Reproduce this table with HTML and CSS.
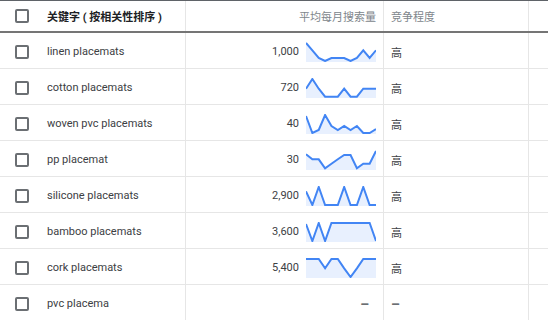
FILE: index.html
```html
<!DOCTYPE html>
<html lang="zh">
<head>
<meta charset="utf-8">
<title>关键字</title>
<link rel="stylesheet" href="styles.css">
</head>
<body>
<div class="table">
  <div class="row head">
    <div class="cell kw"><span class="cb"></span><span class="kw-title">关键字 ( 按相关性排序 )</span></div>
    <div class="cell vol"><span class="h-text">平均每月搜索量</span></div>
    <div class="cell comp"><span class="h-text">竞争程度</span></div>
    <div class="cell last"></div>
  </div>

  <div class="row">
    <div class="cell kw"><span class="cb"></span><span class="kw-text">linen placemats</span></div>
    <div class="cell vol"><span class="num">1,000</span>
      <svg class="spark" viewBox="0 0 70 20" width="70" height="20"><polygon class="area" points="0,1 6.36,8.3 12.73,16 19.09,19 25.45,16 31.82,16 38.18,16 44.55,19 50.91,16 57.27,8.3 63.64,16 70,8.3 70,20 0,20"/><polyline class="line" points="0,1 6.36,8.3 12.73,16 19.09,19 25.45,16 31.82,16 38.18,16 44.55,19 50.91,16 57.27,8.3 63.64,16 70,8.3"/></svg>
    </div>
    <div class="cell comp"><span class="comp-text">高</span></div>
    <div class="cell last"></div>
  </div>

  <div class="row">
    <div class="cell kw"><span class="cb"></span><span class="kw-text">cotton placemats</span></div>
    <div class="cell vol"><span class="num">720</span>
      <svg class="spark" viewBox="0 0 70 20" width="70" height="20"><polygon class="area" points="0,10.7 6.36,1 12.73,10.7 19.09,18.7 25.45,18.7 31.82,18.7 38.18,10.7 44.55,18.7 50.91,18.7 57.27,10.7 63.64,10.7 70,10.7 70,20 0,20"/><polyline class="line" points="0,10.7 6.36,1 12.73,10.7 19.09,18.7 25.45,18.7 31.82,18.7 38.18,10.7 44.55,18.7 50.91,18.7 57.27,10.7 63.64,10.7 70,10.7"/></svg>
    </div>
    <div class="cell comp"><span class="comp-text">高</span></div>
    <div class="cell last"></div>
  </div>

  <div class="row">
    <div class="cell kw"><span class="cb"></span><span class="kw-text">woven pvc placemats</span></div>
    <div class="cell vol"><span class="num">40</span>
      <svg class="spark" viewBox="0 0 70 20" width="70" height="20"><polygon class="area" points="0,2 6.36,19 12.73,16 19.09,1 25.45,12 31.82,16 38.18,12 44.55,16 50.91,12 57.27,19 63.64,19 70,15 70,20 0,20"/><polyline class="line" points="0,2 6.36,19 12.73,16 19.09,1 25.45,12 31.82,16 38.18,12 44.55,16 50.91,12 57.27,19 63.64,19 70,15"/></svg>
    </div>
    <div class="cell comp"><span class="comp-text">高</span></div>
    <div class="cell last"></div>
  </div>

  <div class="row">
    <div class="cell kw"><span class="cb"></span><span class="kw-text">pp placemat</span></div>
    <div class="cell vol"><span class="num">30</span>
      <svg class="spark" viewBox="0 0 70 20" width="70" height="20"><polygon class="area" points="0,4.3 6.36,9.3 12.73,9.3 19.09,18.3 25.45,13.7 31.82,9.3 38.18,5 44.55,5 50.91,18.3 57.27,13.7 63.64,13.7 70,1 70,20 0,20"/><polyline class="line" points="0,4.3 6.36,9.3 12.73,9.3 19.09,18.3 25.45,13.7 31.82,9.3 38.18,5 44.55,5 50.91,18.3 57.27,13.7 63.64,13.7 70,1"/></svg>
    </div>
    <div class="cell comp"><span class="comp-text">高</span></div>
    <div class="cell last"></div>
  </div>

  <div class="row">
    <div class="cell kw"><span class="cb"></span><span class="kw-text">silicone placemats</span></div>
    <div class="cell vol"><span class="num">2,900</span>
      <svg class="spark" viewBox="0 0 70 20" width="70" height="20"><polygon class="area" points="0,5.3 6.36,19 12.73,1 19.09,19 25.45,19 31.82,19 38.18,1 44.55,19 50.91,19 57.27,1 63.64,19 70,19 70,20 0,20"/><polyline class="line" points="0,5.3 6.36,19 12.73,1 19.09,19 25.45,19 31.82,19 38.18,1 44.55,19 50.91,19 57.27,1 63.64,19 70,19"/></svg>
    </div>
    <div class="cell comp"><span class="comp-text">高</span></div>
    <div class="cell last"></div>
  </div>

  <div class="row">
    <div class="cell kw"><span class="cb"></span><span class="kw-text">bamboo placemats</span></div>
    <div class="cell vol"><span class="num">3,600</span>
      <svg class="spark" viewBox="0 0 70 20" width="70" height="20"><polygon class="area" points="0,2 6.36,19 12.73,1 19.09,19 25.45,1 31.82,1 38.18,1 44.55,1 50.91,1 57.27,1 63.64,1 70,19 70,20 0,20"/><polyline class="line" points="0,2 6.36,19 12.73,1 19.09,19 25.45,1 31.82,1 38.18,1 44.55,1 50.91,1 57.27,1 63.64,1 70,19"/></svg>
    </div>
    <div class="cell comp"><span class="comp-text">高</span></div>
    <div class="cell last"></div>
  </div>

  <div class="row">
    <div class="cell kw"><span class="cb"></span><span class="kw-text">cork placemats</span></div>
    <div class="cell vol"><span class="num">5,400</span>
      <svg class="spark" viewBox="0 0 70 20" width="70" height="20"><polygon class="area" points="0,1 6.36,1 12.73,1 19.09,10.3 25.45,1 31.82,1 38.18,10.3 44.55,19 50.91,10.3 57.27,1 63.64,1 70,1 70,20 0,20"/><polyline class="line" points="0,1 6.36,1 12.73,1 19.09,10.3 25.45,1 31.82,1 38.18,10.3 44.55,19 50.91,10.3 57.27,1 63.64,1 70,1"/></svg>
    </div>
    <div class="cell comp"><span class="comp-text">高</span></div>
    <div class="cell last"></div>
  </div>

  <div class="row">
    <div class="cell kw"><span class="cb"></span><span class="kw-text">pvc placema</span></div>
    <div class="cell vol empty"><span class="dash">–</span></div>
    <div class="cell comp"><span class="dash">–</span></div>
    <div class="cell last"></div>
  </div>
</div>
</body>
</html>
```

FILE: styles.css
```css
* { box-sizing: border-box; }
html, body {
  margin: 0;
  padding: 0;
  background: #ffffff;
}
body {
  font-family: Roboto, "Noto Sans CJK SC", sans-serif;
  font-size: 11px;
  color: #3c4043;
  width: 548px;
  height: 320px;
  overflow: hidden;
}
.table {
  display: flex;
  flex-direction: column;
}
.row {
  display: grid;
  grid-template-columns: 186px 198px 145px 1fr;
  height: 36px;
  border-bottom: 1px solid #e6e6e6;
}
.row > .cell { padding-top: 2px; }
.row.head {
  height: 33px;
  border-top: 1px solid #5f6368;
  border-bottom: 2px solid #757575;
}
.row.head > .cell { padding-top: 0; }
.cell {
  display: flex;
  align-items: center;
  border-right: 1px solid #e6e6e6;
  min-width: 0;
}
.cell.last { border-right: none; }
.kw { padding-left: 15px; gap: 18px; }
.cb {
  width: 14px;
  height: 14px;
  border: 2px solid #6b6f73;
  border-radius: 2px;
  flex: none;
}
.kw-title {
  font-weight: 700;
  color: #202124;
  font-size: 11px;
  white-space: nowrap;
}
.kw-text { white-space: nowrap; }
.vol {
  justify-content: flex-end;
  padding-right: 7px;
  gap: 7px;
}
.vol.empty { padding-right: 14px; }
.h-text { color: #80868b; white-space: nowrap; }
.comp { padding-left: 7px; }
.num { white-space: nowrap; }
.spark { display: block; flex: none; }
.spark .area { fill: #e8f0fe; stroke: none; }
.spark .line {
  fill: none;
  stroke: #4285f4;
  stroke-width: 2;
  stroke-linejoin: miter;
}
.dash {
  color: #6b6f73;
  font-size: 14px;
  font-weight: 700;
  line-height: 1;
}
```
